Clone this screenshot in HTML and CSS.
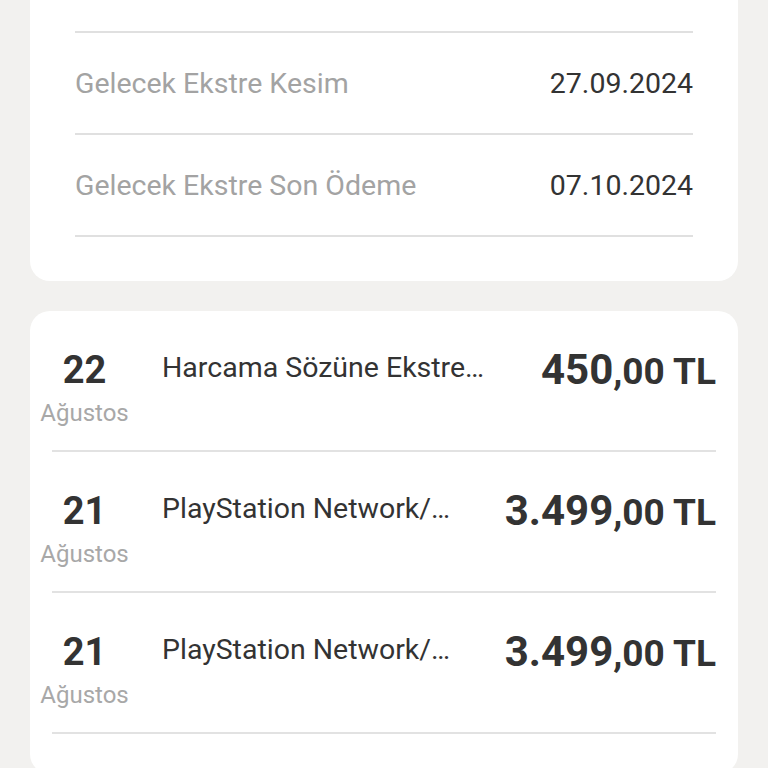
FILE: index.html
```html
<!DOCTYPE html>
<html>
  <head>
    <meta charset="UTF-8">
    <title>Ekstre</title>
    <link rel="stylesheet" href="styles.css">
  </head>
  <body>
  <div class="page">
    <div class="card info">
      <div class="info-row">
        <span class="label">Gelecek Ekstre Kesim</span>
        <span class="value">27.09.2024</span>
      </div>
      <div class="info-row">
        <span class="label">Gelecek Ekstre Son Ödeme</span>
        <span class="value">07.10.2024</span>
      </div>
    </div>

    <div class="card txns">
      <div class="txn">
        <div class="date"><div class="day">22</div><div class="month">Ağustos</div></div>
        <div class="desc">Harcama Sözüne Ekstre…</div>
        <div class="amount"><span class="big">450</span>,00 TL</div>
      </div>
      <div class="txn">
        <div class="date"><div class="day">21</div><div class="month">Ağustos</div></div>
        <div class="desc">PlayStation Network/…</div>
        <div class="amount"><span class="big">3.499</span>,00 TL</div>
      </div>
      <div class="txn">
        <div class="date"><div class="day">21</div><div class="month">Ağustos</div></div>
        <div class="desc">PlayStation Network/…</div>
        <div class="amount"><span class="big">3.499</span>,00 TL</div>
      </div>
    </div>
  </div>
  </body>
</html>
```
FILE: styles.css
```css
html, body {
  margin: 0;
  background: #f2f1ef;
  font-family: Roboto, "Liberation Sans", sans-serif;
  color: #333;
}

.page {
  padding: 0 30px;
  height: 768px;
  overflow: hidden;
}

.card {
  background: #fff;
  border-radius: 20px;
}

/* statement dates */
.info {
  border-top-left-radius: 0;
  border-top-right-radius: 0;
  padding: 31px 45px 44px;
}

.info-row {
  display: flex;
  justify-content: space-between;
  align-items: center;
  height: 100px;
  border-bottom: 2px solid #e0e0e0;
  font-size: 28.5px;
}

.info-row:first-child {
  border-top: 2px solid #e0e0e0;
}

.label { color: #a3a3a3; }
.value { color: #333; }

/* transactions */
.txns {
  margin-top: 30px;
  padding-bottom: 40px;
}

.txn {
  display: flex;
  align-items: flex-start;
  margin: 0 22px;
  padding: 36px 0 23px;
  border-bottom: 2px solid #e2e2e2;
}

.date {
  width: 89px;
  margin-left: -12px;
  text-align: center;
}

.day {
  font-size: 38px;
  font-weight: 700;
  line-height: 46px;
  color: #333;
}

.month {
  margin-top: 6px;
  font-size: 24px;
  line-height: 28px;
  color: #a8a8a8;
}

.desc {
  flex: 1;
  margin-left: 33px;
  font-size: 28.5px;
  line-height: 42px;
  white-space: nowrap;
  color: #333;
}

.amount {
  font-size: 37px;
  font-weight: 700;
  line-height: 46px;
  white-space: nowrap;
  color: #333;
}

.amount .big {
  font-size: 42px;
}
```
